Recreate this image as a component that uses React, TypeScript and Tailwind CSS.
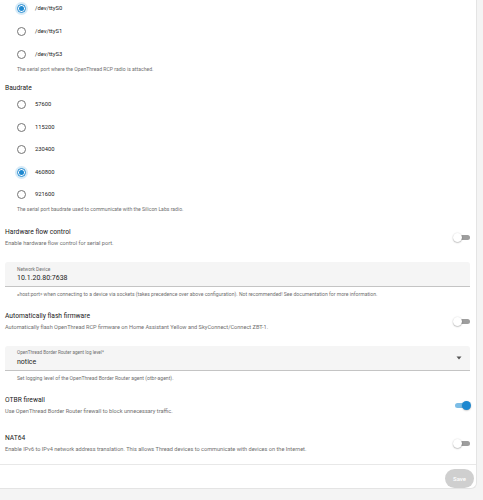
import React from "react";

type RadioProps = { label: string; checked?: boolean; h: string };

const Radio = ({ label, checked, h }: RadioProps) => (
  <div className={`flex items-center ${h}`}>
    <div className="w-[30px] flex items-center">
      <span
        className={`ml-[12px] w-[9px] h-[9px] rounded-full border flex items-center justify-center ${
          checked
            ? "border-[#1e88d0] shadow-[0_0_0_2px_rgba(30,136,208,0.18)]"
            : "border-[#757575]"
        }`}
      >
        {checked && <span className="w-[4.5px] h-[4.5px] rounded-full bg-[#1e88d0]" />}
      </span>
    </div>
    <span className="text-[5.8px] text-[#212121]">{label}</span>
  </div>
);

const Toggle = ({ on }: { on?: boolean }) => (
  <div className="relative w-[18px] h-[9px] flex items-center">
    <div
      className={`ml-[2px] w-[15px] h-[5px] rounded-full ${
        on ? "bg-[#7cbde6]" : "bg-[#9e9e9e]"
      }`}
    />
    <div
      className={`absolute top-0 w-[9px] h-[9px] rounded-full ${
        on
          ? "right-0 bg-[#1e88d0] shadow-[0_0.5px_1.5px_rgba(0,0,0,0.3)]"
          : "left-0 bg-white shadow-[0_0.5px_1.5px_rgba(0,0,0,0.4)]"
      }`}
    />
  </div>
);

const SwitchRow = ({
  title,
  desc,
  on,
  mt,
}: {
  title: string;
  desc: string;
  on?: boolean;
  mt: string;
}) => (
  <div className={`flex items-center justify-between ${mt}`}>
    <div>
      <div className="h-[10px] leading-[10px] text-[6.7px] text-[#212121]">{title}</div>
      <div className="mt-[2px] h-[8px] leading-[8px] text-[5.6px] text-[#6f6f6f]">{desc}</div>
    </div>
    <div className="mr-[-1px]">
      <Toggle on={on} />
    </div>
  </div>
);

const Helper = ({ text, mt }: { text: string; mt?: string }) => (
  <div className={`pl-[12px] h-[6px] leading-[6px] text-[5.1px] text-[#6f6f6f] ${mt ?? ""}`}>
    {text}
  </div>
);

export default function App() {
  return (
    <div className="w-[483px] h-[500px] overflow-hidden bg-[#f4f4f4] font-['Roboto',sans-serif]">
      <div className="w-[477px] h-[489px] bg-white rounded-br-[6px] border-r border-b border-[#e4e4e4] flex flex-col">
        <div className="pl-[5px] pr-[6px] flex flex-col">
          <div className="-mt-[3px]">
            <Radio label="/dev/ttyS0" checked h="h-[23px]" />
            <Radio label="/dev/ttyS1" h="h-[23px]" />
            <Radio label="/dev/ttyS3" h="h-[23px]" />
          </div>
          <Helper text="The serial port where the OpenThread RCP radio is attached." />

          <div className="mt-[11px] h-[10px] leading-[10px] text-[6.7px] text-[#212121]">Baudrate</div>
          <div className="mt-[0.5px]">
            <Radio label="57600" h="h-[22.5px]" />
            <Radio label="115200" h="h-[22.5px]" />
            <Radio label="230400" h="h-[22.5px]" />
            <Radio label="460800" checked h="h-[22.5px]" />
            <Radio label="921600" h="h-[22.5px]" />
          </div>
          <Helper text="The serial port baudrate used to communicate with the Silicon Labs radio." />

          <SwitchRow
            mt="mt-[15px]"
            title="Hardware flow control"
            desc="Enable hardware flow control for serial port."
          />

          <div className="mt-[15px] h-[25px] bg-[#f5f5f5] rounded-t-[3px] border-b border-[#c4c4c4] pl-[12px] pt-[5px]">
            <div className="h-[6px] leading-[6px] text-[4.8px] text-[#6f6f6f]">Network Device</div>
            <div className="mt-[0.5px] h-[9px] leading-[9px] text-[7px] text-[#212121]">10.1.20.80:7638</div>
          </div>
          <Helper
            mt="mt-[4px]"
            text="«host:port» when connecting to a device via sockets (takes precedence over above configuration). Not recommended! See documentation for more information."
          />

          <SwitchRow
            mt="mt-[14px]"
            title="Automatically flash firmware"
            desc="Automatically flash OpenThread RCP firmware on Home Assistant Yellow and SkyConnect/Connect ZBT-1."
          />

          <div className="mt-[15px] h-[25px] bg-[#f5f5f5] rounded-t-[3px] border-b border-[#c4c4c4] pl-[12px] pr-[8px] pt-[4px] flex justify-between">
            <div>
              <div className="h-[6px] leading-[6px] text-[4.6px] text-[#6f6f6f]">
                OpenThread Border Router agent log level*
              </div>
              <div className="mt-[1.5px] h-[9px] leading-[9px] text-[7px] text-[#212121]">notice</div>
            </div>
            <div className="self-center -mt-[4px]">
              <svg width="6" height="4" viewBox="0 0 6 4">
                <path d="M0.5 0.5 L5.5 0.5 L3 3.5 Z" fill="#555" />
              </svg>
            </div>
          </div>
          <Helper
            mt="mt-[4px]"
            text="Set logging level of the OpenThread Border Router agent (otbr-agent)."
          />

          <SwitchRow
            mt="mt-[14px]"
            on
            title="OTBR firewall"
            desc="Use OpenThread Border Router firewall to block unnecessary traffic."
          />
          <SwitchRow
            mt="mt-[18px]"
            title="NAT64"
            desc="Enable IPv6 to IPv4 network address translation. This allows Thread devices to communicate with devices on the Internet."
          />
        </div>

        <div className="mt-[11px] border-t border-[#e8e8e8] flex justify-end pr-[2px] pt-[4px]">
          <button className="w-[29px] h-[19px] rounded-full bg-[#cfcfcf] text-white text-[6px] font-medium">
            Save
          </button>
        </div>
      </div>
    </div>
  );
}
